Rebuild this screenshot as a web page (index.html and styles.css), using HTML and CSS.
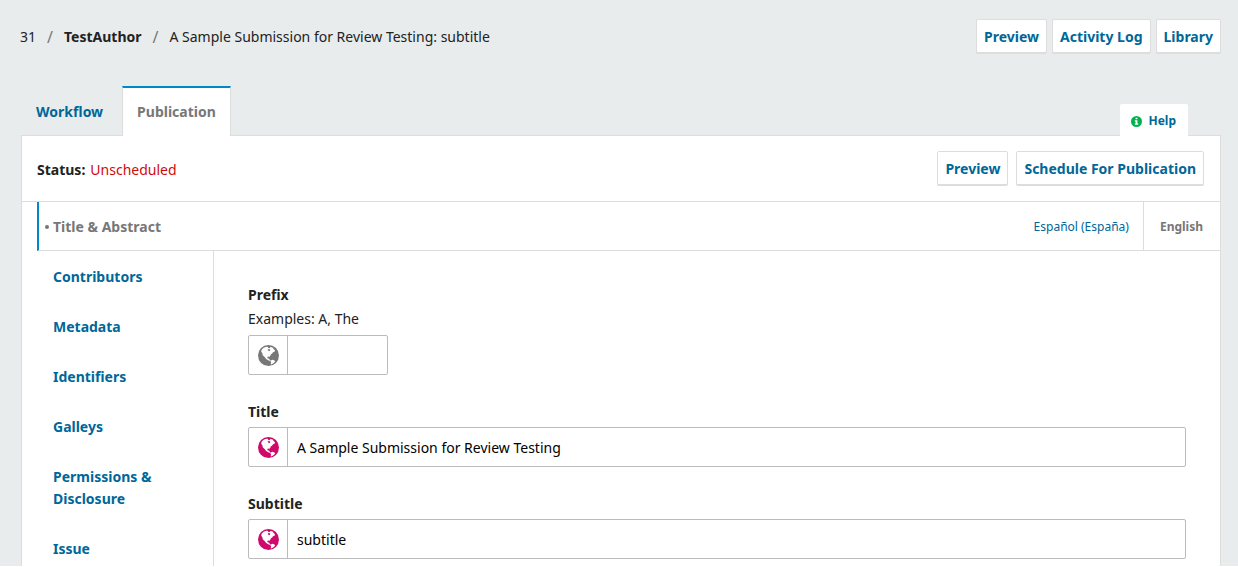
FILE: index.html
```
<!DOCTYPE html>
<html lang="en">
<head>
<meta charset="utf-8">
<title>A Sample Submission for Review Testing</title>
<link rel="stylesheet" href="styles.css">
</head>
<body>
<svg class="sprite" aria-hidden="true">
  <symbol id="globe" viewBox="0 0 21 21">
    <circle cx="10.5" cy="10.5" r="10.500" fill="currentColor"/>
    <path fill="#fff" d="M3.600 4.800C4.800 3.200 6.500 2.100 8.300 1.700L10.200 1.900 10 3 11.300 3.300 12.600 2 14.600 2.600 15.600 3.900 17 5.200 16.500 6.800 15 7.200 14.200 8.500 12.700 9.400 12.300 10.800 11.500 11.800 9.900 11.600 9.300 12.400 9.700 13.500 11 13.600 11.600 14.800 12.800 15.400 12.200 16 10.200 15.300 8.200 14.100 6.600 12.100 4.700 10.300 4.400 8.200 3.200 6.800Z"/>
    <path fill="#fff" d="M13.200 15.200L14.800 14.800 17.200 15.900 16.400 17.500 14.200 19 13 19.400 12.800 18.200 13.200 17.300 12.300 16.500Z"/>
    <path fill="currentColor" d="M9.600 4.600L10.800 3.900 12.200 4.600 12 5.800 10.900 6.300Z"/>
  </symbol>
</svg>
<div class="page">
  <header class="header">
    <nav class="breadcrumb" aria-label="Submission">
      <span>31</span><span class="slash">/</span><strong>TestAuthor</strong><span class="slash">/</span><span>A Sample Submission for Review Testing: subtitle</span>
    </nav>
    <div class="actions">
      <button class="button" type="button">Preview</button>
      <button class="button" type="button">Activity Log</button>
      <button class="button" type="button">Library</button>
    </div>
  </header>

  <div class="tabs">
    <button class="tab" type="button">Workflow</button>
    <button class="tab tab-active" type="button">Publication</button>
    <button class="help" type="button">
      <svg class="help-icon" viewBox="0 0 12 12" aria-hidden="true"><circle cx="6" cy="6" r="6" fill="#00b24e"/><path fill="#fff" d="M5 2h2v1.600H5zM4.200 4.700H7v3.600h.9v1.300H4.200V8.300H5V6h-.8z"/></svg>
      Help
    </button>
  </div>

  <main class="panel">
    <div class="status-row">
      <div class="status"><strong>Status:</strong><span class="unscheduled">Unscheduled</span></div>
      <div class="actions actions-wide">
        <button class="button" type="button">Preview</button>
        <button class="button" type="button">Schedule For Publication</button>
      </div>
    </div>
    <div class="section-row">
      <a class="current" href="#title">Title &amp; Abstract</a>
      <div class="locales">
        <button class="locale" type="button">Español (España)</button>
        <button class="locale locale-active" type="button">English</button>
      </div>
    </div>
    <div class="content">
      <nav class="side-nav" aria-label="Publication">
        <a href="#contributors">Contributors</a>
        <a href="#metadata">Metadata</a>
        <a href="#identifiers">Identifiers</a>
        <a href="#galleys">Galleys</a>
        <a href="#permissions">Permissions &amp; Disclosure</a>
        <a href="#issue">Issue</a>
      </nav>
      <form class="form">
        <div class="field">
          <label for="prefix">Prefix</label>
          <div class="hint" id="prefix-hint">Examples: A, The</div>
          <div class="control control-small">
            <span class="globe"><svg aria-hidden="true"><use href="#globe"/></svg></span>
            <input id="prefix" type="text" aria-describedby="prefix-hint">
          </div>
        </div>
        <div class="field">
          <label for="title">Title</label>
          <div class="control">
            <span class="globe globe-filled"><svg aria-hidden="true"><use href="#globe"/></svg></span>
            <input id="title" type="text" value="A Sample Submission for Review Testing">
          </div>
        </div>
        <div class="field">
          <label for="subtitle">Subtitle</label>
          <div class="control">
            <span class="globe globe-filled"><svg aria-hidden="true"><use href="#globe"/></svg></span>
            <input id="subtitle" type="text" value="subtitle">
          </div>
        </div>
      </form>
    </div>
  </main>
</div>
</body>
</html>
```
FILE: styles.css
```
* { box-sizing: border-box; }
body {
  margin: 0;
  background: #fff;
  color: #222;
  font: 14px/24px "Noto Sans", sans-serif;
}
button, input { font: inherit; margin: 0; }
button { cursor: pointer; }
a { text-decoration: none; }
.sprite { display: none; }
.page {
  display: flex;
  flex-direction: column;
  height: 100vh;
  overflow: hidden;
  padding: 19px 17px 0 20px;
  background: #e8eced;
  border-bottom: 1px solid #fff;
}
.header {
  display: flex;
  justify-content: space-between;
  align-items: center;
  flex: none;
}
.breadcrumb { display: flex; gap: 11px; padding-top: 2px; }
.slash { color: #777; font-size: 16px; }
.actions { display: flex; gap: 5px; }
.actions-wide { gap: 8px; }
.button {
  padding: 2px 7px 0;
  border: 1px solid #ddd;
  border-radius: 2px;
  background: #fff;
  box-shadow: 0 1px 0 #ddd;
  color: #006798;
  font-weight: 700;
  line-height: 30px;
}
.tabs {
  display: flex;
  align-items: flex-end;
  gap: 4px;
  flex: none;
  margin: 33px 0 -1px 1px;
  position: relative;
}
.tab {
  padding: 0 14px;
  border: 1px solid transparent;
  border-top-width: 2px;
  border-bottom: 0;
  background: none;
  color: #006798;
  font-weight: 700;
  line-height: 48px;
}
.tab-active {
  border-color: #0088cc #ddd;
  background: #fff;
  color: #777;
}
.help {
  display: flex;
  align-items: center;
  gap: 6px;
  margin-left: auto;
  margin-right: 33px;
  padding: 2px 12px 0 11px;
  border: 0;
  border-radius: 2px 2px 0 0;
  background: #fff;
  color: #006798;
  font-size: 12px;
  font-weight: 700;
  line-height: 30px;
}
.help-icon { width: 11px; height: 11px; }
.panel {
  display: flex;
  flex-direction: column;
  flex: 1;
  min-height: 0;
  margin-left: 1px;
  border: 1px solid #ddd;
  border-bottom: 0;
  background: #fff;
}
.status-row {
  display: flex;
  justify-content: space-between;
  align-items: center;
  padding: 15px 16px 16px 15px;
  border-bottom: 1px solid #ddd;
}
.status { display: flex; gap: 5px; padding-top: 4px; }
.unscheduled { color: #d00a0a; }
.section-row {
  display: flex;
  justify-content: space-between;
  margin-left: 15px;
  border-left: 2px solid #0088cc;
  border-bottom: 1px solid #ddd;
  line-height: 48px;
}
.current {
  display: flex;
  align-items: center;
  gap: 4px;
  padding: 2px 0 0 6px;
  color: #777;
  font-weight: 700;
  line-height: 46px;
}
.current::before {
  content: "";
  width: 4px;
  height: 4px;
  border-radius: 50%;
  background: #777;
}
.locales { display: flex; }
.locale {
  padding: 2px 14px 0;
  border: 0;
  background: none;
  color: #006798;
  font-size: 12px;
  line-height: 46px;
}
.locale-active {
  padding: 2px 17px 0 16px;
  border-left: 1px solid #ddd;
  color: #777;
  font-weight: 700;
}
.content { display: flex; flex: 1; min-height: 0; }
.side-nav {
  flex: none;
  width: 192px;
  border-right: 1px solid #ddd;
}
.side-nav a {
  display: block;
  padding: 15px 31px 13px;
  color: #006798;
  font-weight: 700;
  line-height: 22px;
}
.form {
  display: flex;
  flex-direction: column;
  gap: 25px;
  flex: 1;
  padding: 32px 34px;
}
.field label { display: block; font-weight: 700; }
.hint { margin-bottom: 4px; }
.control {
  display: flex;
  height: 40px;
  margin-top: 3px;
  border: 1px solid #bbb;
  border-radius: 2px;
}
.hint + .control { margin-top: 0; }
.control-small { width: 140px; }
.globe {
  display: flex;
  align-items: center;
  justify-content: center;
  flex: none;
  width: 39px;
  border-right: 1px solid #bbb;
  color: #777;
}
.globe svg { width: 21px; height: 21px; }
.globe-filled { color: #d00a6c; }
.control input {
  flex: 1;
  min-width: 0;
  padding: 2px 9px 0;
  border: 0;
  background: none;
  color: #000;
}
```
